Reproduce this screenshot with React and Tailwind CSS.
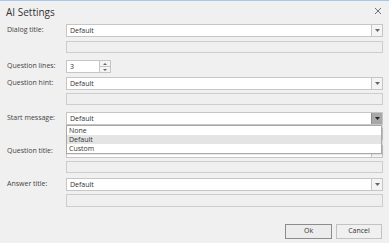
import React from 'react';

const Arrow = ({ dark }) => (
  <svg width="5" height="3" viewBox="0 0 5 3">
    <path d="M0 0h5L2.5 3z" fill={dark ? '#222' : '#666'} />
  </svg>
);

const Combo = ({ value, open, className = '' }) => (
  <div className={`flex h-[13px] bg-white border border-[#c6c6c6] ${className}`}>
    <div className="flex-1 pl-[3px] text-[7px] leading-[11px] text-[#333]">{value}</div>
    <div
      className={`w-[11px] flex items-center justify-center border-l ${
        open ? 'bg-[#a8a8a8] border-[#8f8f8f]' : 'bg-[#f4f4f4] border-[#c6c6c6]'
      }`}
    >
      <Arrow dark={open} />
    </div>
  </div>
);

const TextBox = ({ className = '' }) => (
  <div className={`h-[12px] bg-[#efefef] border border-[#cdcdcd] ${className}`} />
);

const Row = ({ label, children, className = '' }) => (
  <div className={`flex items-center ${className}`}>
    <div className="w-[59px] text-[7px] text-[#444] whitespace-nowrap">{label}</div>
    <div className="flex-1">{children}</div>
  </div>
);

export default function App() {
  return (
    <div
      className="relative w-[389px] h-[243px] bg-[#f0f0f0] border-t border-[#a7c7e7] overflow-hidden"
      style={{ fontFamily: '"Open Sans", "Noto Sans", sans-serif' }}
    >
      <div className="flex justify-between items-start h-[23px] pl-[6px] pr-[7px] pt-[5px]">
        <div className="text-[10px] leading-[12px] text-[#333]">AI Settings</div>
        <svg width="8" height="8" viewBox="0 0 8 8" className="mt-[1px]">
          <path d="M1 1l6 6M7 1l-6 6" stroke="#6f6f6f" strokeWidth="1" />
        </svg>
      </div>

      <div className="pl-[7px] pr-[6px]">
        <Row label="Dialog title:">
          <Combo value="Default" />
        </Row>
        <Row className="mt-[4px]">
          <TextBox />
        </Row>

        <Row label="Question lines:" className="mt-[7px]">
          <div className="flex w-[45px] h-[13px] bg-white border border-[#c6c6c6]">
            <div className="flex-1 pl-[3px] text-[7px] leading-[11px] text-[#333]">3</div>
            <div className="w-[11px] flex flex-col border-l border-[#c6c6c6] bg-[#f4f4f4]">
              <div className="flex-1 flex items-center justify-center border-b border-[#c6c6c6]">
                <svg width="4" height="2" viewBox="0 0 4 2"><path d="M0 2h4L2 0z" fill="#666" /></svg>
              </div>
              <div className="flex-1 flex items-center justify-center">
                <svg width="4" height="2" viewBox="0 0 4 2"><path d="M0 0h4L2 2z" fill="#666" /></svg>
              </div>
            </div>
          </div>
        </Row>

        <Row label="Question hint:" className="mt-[4px]">
          <Combo value="Default" />
        </Row>
        <Row className="mt-[3px]">
          <TextBox />
        </Row>

        <Row label="Start message:" className="mt-[7px]">
          <Combo value="Default" open />
        </Row>
        <Row className="mt-[3px]">
          <TextBox />
        </Row>

        <Row label="Question title:" className="mt-[5px]">
          <Combo value="" />
        </Row>
        <Row className="mt-[3px]">
          <TextBox />
        </Row>

        <Row label="Answer title:" className="mt-[5px]">
          <Combo value="Default" />
        </Row>
        <Row className="mt-[3px]">
          <TextBox className="h-[13px]" />
        </Row>

        <div className="flex justify-end gap-[4px] mt-[17px] pr-[1px]">
          <button className="w-[47px] h-[15px] border border-[#8c8c8c] bg-[#ececec] text-[7px] text-[#333]">
            Ok
          </button>
          <button className="w-[46px] h-[15px] border border-[#c3c3c3] bg-[#f0f0f0] text-[7px] text-[#333]">
            Cancel
          </button>
        </div>
      </div>

      <div className="absolute left-[66px] top-[124px] w-[316px] bg-white border border-[#a8a8a8] text-[7px] text-[#333] shadow-[1px_1px_1px_rgba(0,0,0,0.08)]">
        <div className="h-[9px] leading-[9px] pl-[2px]">None</div>
        <div className="h-[9px] leading-[9px] pl-[2px] bg-[#e4e4e4]">Default</div>
        <div className="h-[9px] leading-[9px] pl-[2px]">Custom</div>
      </div>
    </div>
  );
}
